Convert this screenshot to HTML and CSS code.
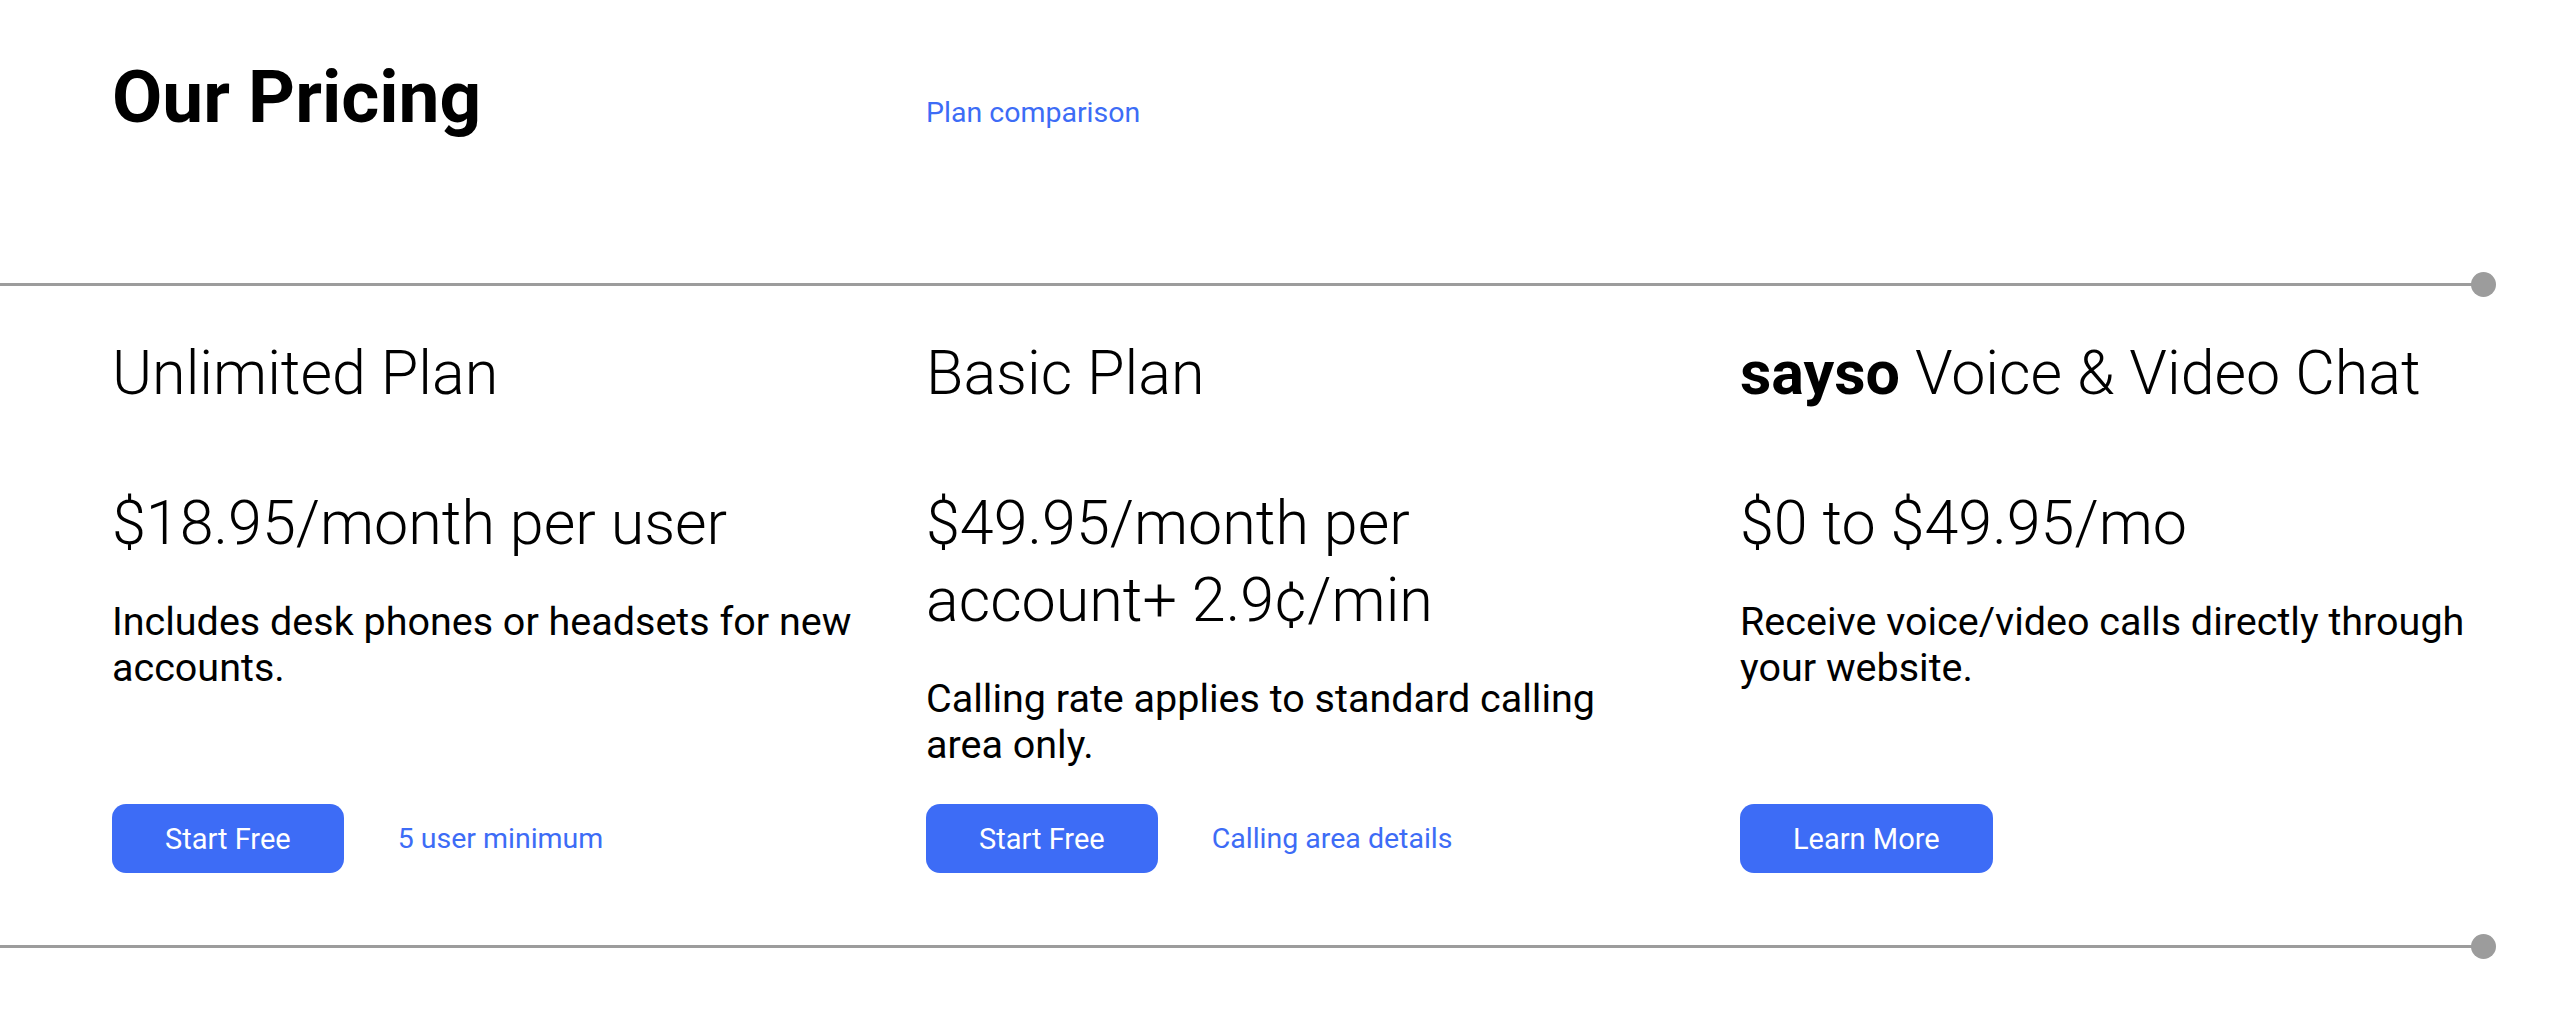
FILE: index.html
```html
<!DOCTYPE html>
<html lang="en">
<head>
<meta charset="utf-8">
<title>Our Pricing</title>
<link rel="stylesheet" href="styles.css">
</head>
<body>
<header class="header">
  <h1 class="heading">Our Pricing</h1>
  <a class="link header-link" href="#">Plan comparison</a>
</header>

<div class="rule"><span class="rule-line"></span><span class="rule-dot"></span></div>

<section class="plans">
  <article class="plan">
    <h2 class="plan-title">Unlimited Plan</h2>
    <p class="plan-price">$18.95/month per user</p>
    <p class="plan-desc">Includes desk phones or headsets for new accounts.</p>
    <div class="plan-actions">
      <a class="btn" href="#">Start Free</a>
      <a class="link" href="#">5 user minimum</a>
    </div>
  </article>
  <article class="plan">
    <h2 class="plan-title">Basic Plan</h2>
    <p class="plan-price">$49.95/month per account+ 2.9¢/min</p>
    <p class="plan-desc">Calling rate applies to standard calling area only.</p>
    <div class="plan-actions">
      <a class="btn" href="#">Start Free</a>
      <a class="link" href="#">Calling area details</a>
    </div>
  </article>
  <article class="plan">
    <h2 class="plan-title"><strong class="brand">sayso</strong> Voice &amp; Video Chat</h2>
    <p class="plan-price">$0 to $49.95/mo</p>
    <p class="plan-desc">Receive voice/video calls directly through your website.</p>
    <div class="plan-actions">
      <a class="btn" href="#">Learn More</a>
    </div>
  </article>
</section>

<div class="rule rule-bottom"><span class="rule-line"></span><span class="rule-dot"></span></div>
</body>
</html>
```

FILE: styles.css
```css
* {
  box-sizing: border-box;
}

html, body {
  margin: 0;
  padding: 0;
  background: #ffffff;
}

body {
  font-family: Roboto, "Liberation Sans", Arial, sans-serif;
  color: #000000;
  width: 2574px;
}

.header {
  display: grid;
  grid-template-columns: 814px 1fr;
  align-items: baseline;
  padding: 60px 0 0 112px;
}

.heading {
  margin: 0;
  font-size: 73px;
  line-height: 74px;
  font-weight: 700;
}

.link {
  color: #3d6cf6;
  text-decoration: none;
  font-size: 28.5px;
  font-weight: 400;
}

.rule {
  display: flex;
  align-items: center;
  height: 25px;
  margin-top: 138px;
  padding-right: 78px;
}

.rule-line {
  flex: 1;
  height: 3px;
  background: #9c9c9c;
}

.rule-dot {
  width: 25px;
  height: 25px;
  border-radius: 50%;
  background: #9c9c9c;
  margin-left: -2px;
}

.rule-bottom {
  margin-top: 61px;
}

.plans {
  display: grid;
  grid-template-columns: 814px 814px 1fr;
  padding: 40px 0 0 112px;
}

.plan {
  display: flex;
  flex-direction: column;
}

.plan-title {
  margin: 0;
  font-size: 61px;
  line-height: 72px;
  font-weight: 300;
}

.brand {
  font-weight: 700;
}

.plan-price {
  margin: 76px 0 0;
  max-width: 720px;
  font-size: 61px;
  line-height: 77px;
  font-weight: 300;
}

.plan-desc {
  margin: 37px 0 0;
  max-width: 752px;
  font-size: 39.5px;
  line-height: 46px;
  font-weight: 400;
}

.plan-actions {
  margin-top: auto;
  padding-top: 36px;
  display: flex;
  align-items: center;
  gap: 54px;
}

.btn {
  display: inline-flex;
  align-items: center;
  justify-content: center;
  height: 69px;
  padding: 0 53px;
  border-radius: 14px;
  background: #3d6cf6;
  color: #ffffff;
  text-decoration: none;
  font-size: 29px;
  font-weight: 400;
}
```
